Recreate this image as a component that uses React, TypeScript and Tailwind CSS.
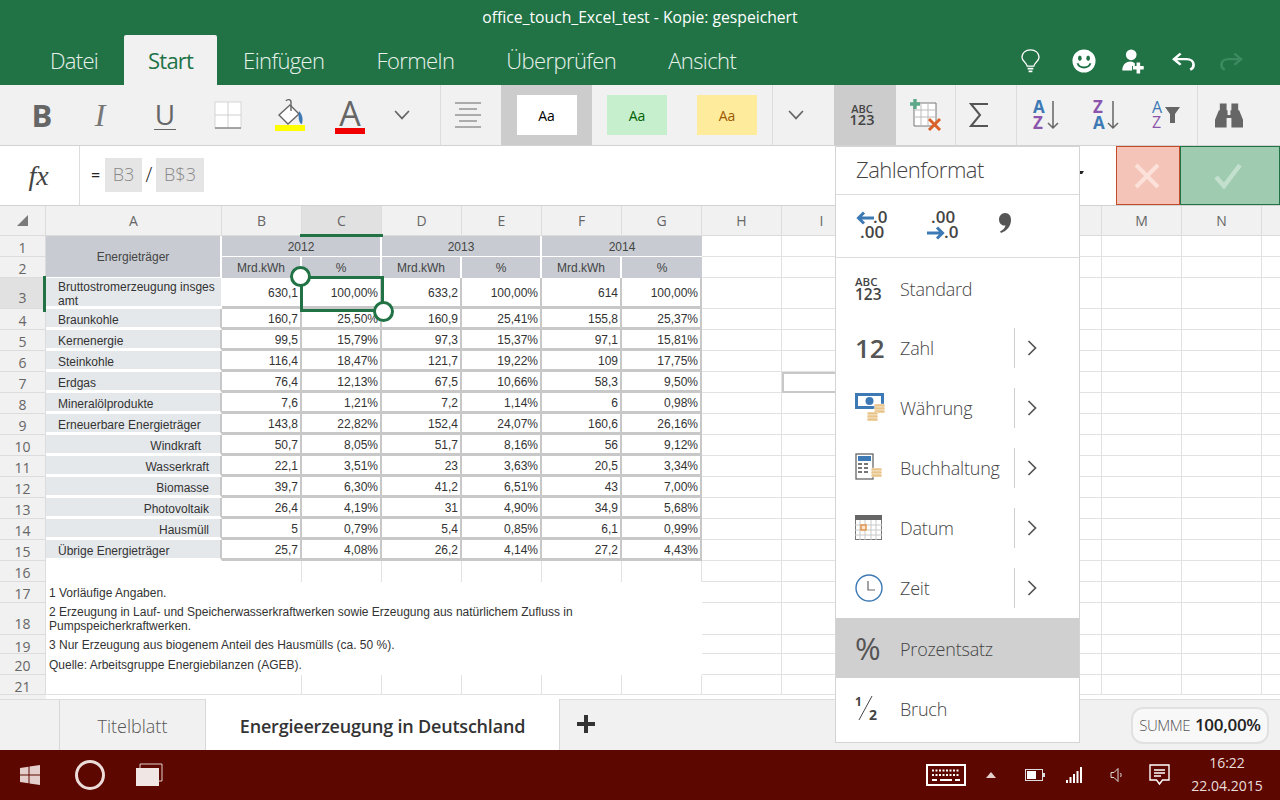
import React from "react";

const tabs = ["Datei", "Start", "Einfügen", "Formeln", "Überprüfen", "Ansicht"];

const Btn = ({ w, children, className = "" }: { w: string; children: React.ReactNode; className?: string }) => (
  <div className={`${w} h-full flex items-center justify-center shrink-0 ${className}`}>{children}</div>
);

const Bold = () => <span className="font-['Open_Sans',sans-serif] text-[31px] font-bold text-[#666] leading-none">B</span>;

function Borders() {
  return (
    <svg width="28" height="28" viewBox="0 0 28 28" fill="none">
      <rect x="1" y="1" width="26" height="26" fill="#fff" stroke="#d6d6d6" strokeWidth="1" />
      <path d="M14 1V27M1 14H27" stroke="#cfcfcf" strokeWidth="1" />
      <path d="M1 27H27" stroke="#777" strokeWidth="1.2" />
    </svg>
  );
}
function Fill() {
  return (
    <svg width="32" height="34" viewBox="0 0 32 34" fill="none">
      <path d="M16 7L5 17L14 26L25 16Z" fill="#fff" stroke="#666" strokeWidth="1.4" />
      <path d="M12 3C13 1 17 1 17 4V13" stroke="#666" strokeWidth="1.4" />
      <path d="M25 13C29 17 29 22 28 26C25 26 24 20 25 13Z" fill="#3d7ab5" />
      <rect x="1" y="27" width="30" height="6" fill="#ffff00" />
    </svg>
  );
}
function SortIcon({ first, second, c1, c2 }: { first: string; second: string; c1: string; c2: string }) {
  return (
    <svg width="28" height="32" viewBox="0 0 28 32" fill="none" className="overflow-visible">
      <text x="0" y="14" fontFamily="Open Sans" fontWeight="700" fontSize="17" fill={c1}>{first}</text>
      <text x="0" y="30" fontFamily="Open Sans" fontWeight="700" fontSize="17" fill={c2}>{second}</text>
      <path d="M20 2V29M15 24L20 29L25 24" stroke="#666" strokeWidth="1.5" />
    </svg>
  );
}
function InsertTable() {
  return (
    <svg width="32" height="32" viewBox="0 0 32 32" fill="none">
      <path d="M4 4H26V27H4Z" fill="#fff" stroke="#777" />
      <path d="M4 11H26M4 18H26M11 4V27M18 4V27" stroke="#bbb" />
      <path d="M5 0V10M0 5H10" stroke="#5fa88a" strokeWidth="3.4" />
      <path d="M19 20L30 31M30 20L19 31" stroke="#d8622a" strokeWidth="3" />
    </svg>
  );
}
function Binoculars() {
  return (
    <svg width="28" height="26" viewBox="0 0 29 26" fill="#666">
      <path d="M5 1H12V9H5ZM17 1H24V9H17Z" />
      <path d="M4 8H13V13H16V8H25L29 18V26H17V16H12V26H0V18Z" />
    </svg>
  );
}
function Funnel() {
  return (
    <svg width="30" height="32" viewBox="0 0 30 32" fill="none" className="overflow-visible">
      <text x="0" y="14" fontFamily="Open Sans" fontWeight="400" fontSize="16" fill="#3d7ab5">A</text>
      <text x="0" y="29" fontFamily="Open Sans" fontWeight="400" fontSize="16" fill="#8b55ad">Z</text>
      <path d="M13 8H28L23 15V24H18V15Z" fill="#666" />
    </svg>
  );
}
const Chevron = ({ size = 16 }: { size?: number }) => (
  <svg width={size} height={size * 0.62} viewBox="0 0 16 10" fill="none">
    <path d="M1 1L8 8.5L15 1" stroke="#666" strokeWidth="1.7" />
  </svg>
);

function Ribbon() {
  return (
    <div className="h-[61px] shrink-0 flex bg-[#f1f1f1] border-b border-[#d2d2d2] pl-[12px]">
      <Btn w="w-[60px]"><Bold /></Btn>
      <Btn w="w-[56px]"><span className="font-['Liberation_Serif',serif] italic text-[32px] text-[#777] leading-none">I</span></Btn>
      <Btn w="w-[74px]">
        <span className="flex flex-col items-center">
          <span className="font-['Open_Sans',sans-serif] text-[28px] text-[#666] leading-[28px]">U</span>
          <span className="w-[22px] h-[1px] bg-[#666] mt-[1px]" />
        </span>
      </Btn>
      <Btn w="w-[52px]"><Borders /></Btn>
      <Btn w="w-[72px]"><Fill /></Btn>
      <Btn w="w-[48px]">
        <span className="flex flex-col items-center mt-[2px]">
          <span className="font-['Open_Sans',sans-serif] text-[34px] text-[#666] leading-[30px]">A</span>
          <span className="w-[30px] h-[6px] bg-[#f00000]" />
        </span>
      </Btn>
      <Btn w="w-[56px]"><Chevron /></Btn>
      <div className="w-[11px] h-full border-r border-[#dcdcdc]" />
      <Btn w="w-[60px]" className="pr-[6px]">
        <svg width="28" height="28" viewBox="0 0 28 28" stroke="#666"><path d="M1 2H27M5 8H23M1 14H27M5 20H23M1 26H27" /></svg>
      </Btn>
      <Btn w="w-[91px]" className="bg-[#cccccc]">
        <div className="w-[60px] h-[40px] bg-white flex items-center justify-center text-[14px] text-black">Aa</div>
      </Btn>
      <Btn w="w-[90px]"><div className="w-[60px] h-[40px] bg-[#c6efce] flex items-center justify-center text-[14px] text-[#006100]">Aa</div></Btn>
      <Btn w="w-[91px]" className="border-r border-[#dcdcdc]"><div className="w-[60px] h-[40px] bg-[#ffeb9c] flex items-center justify-center text-[14px] text-[#9c5700]">Aa</div></Btn>
      <Btn w="w-[61px]" className="pr-[15px]"><Chevron /></Btn>
      <Btn w="w-[62px]" className="bg-[#cccccc] pr-[6px]">
        <div className="flex flex-col items-center text-[#444] leading-none">
          <span className="text-[11px] font-semibold">ABC</span>
          <span className="text-[14.5px] font-semibold -mt-[1px]">123</span>
        </div>
      </Btn>
      <Btn w="w-[60px]" className="border-r border-[#dcdcdc]"><InsertTable /></Btn>
      <Btn w="w-[61px]" className="border-r border-[#dcdcdc] pr-[14px]">
        <svg width="20" height="26" viewBox="0 0 20 26" fill="none" stroke="#555" strokeWidth="2"><path d="M19 2H2L11 13L2 24H19" /></svg>
      </Btn>
      <Btn w="w-[60px]"><SortIcon first="A" second="Z" c1="#3d7ab5" c2="#8b55ad" /></Btn>
      <Btn w="w-[60px]"><SortIcon first="Z" second="A" c1="#8b55ad" c2="#3d7ab5" /></Btn>
      <Btn w="w-[61px]" className="border-r border-[#dcdcdc]"><Funnel /></Btn>
      <Btn w="w-[61px]"><Binoculars /></Btn>
    </div>
  );
}

function TitleIcons() {
  return (
    <div className="flex items-center ml-auto mr-[37px] pt-[2px]">
      <svg width="19" height="24" viewBox="0 0 20 28" fill="none" stroke="#fff" strokeWidth="1.4" preserveAspectRatio="none"><path d="M6.5 20C6 16 1 14 1 9.5C1 4.5 5 1 10 1C15 1 19 4.5 19 9.5C19 14 14 16 13.5 20Z" /><path d="M7 23H13M8 26H12" strokeWidth="2" /></svg>
      <svg width="24" height="24" viewBox="0 0 26 26" className="ml-[32px]"><circle cx="13" cy="13" r="12.5" fill="#fff" /><ellipse cx="8.5" cy="10" rx="2" ry="3" fill="#217346" /><ellipse cx="17.5" cy="10" rx="2" ry="3" fill="#217346" /><path d="M6 15.5C8 21.5 18 21.5 20 15.5" stroke="#217346" strokeWidth="2" fill="none" /></svg>
      <svg width="24" height="25" viewBox="0 0 26 28" fill="#fff" className="ml-[25px]"><circle cx="11" cy="6.5" r="6" /><path d="M1 24C1 17 6 14 10 14C12 14 14 15 15 16V19H12V24Z" /><path d="M17 15H21V19H25V23H21V27.5H17V23H13V19H17Z" /></svg>
      <svg width="23" height="19" viewBox="0 0 24 24" fill="none" stroke="#fff" strokeWidth="2.8" className="ml-[27px]" preserveAspectRatio="none"><path d="M9 2L2 9L9 16" /><path d="M2 9H15C20 9 22.5 12 22.5 16C22.5 19 21 21.5 19 22.5" /></svg>
      <svg width="23" height="19" viewBox="0 0 24 24" fill="none" stroke="#3c8a60" strokeWidth="2.8" className="ml-[25px]" preserveAspectRatio="none"><path d="M15 2L22 9L15 16" /><path d="M22 9H9C4 9 1.5 12 1.5 16C1.5 19 3 21.5 5 22.5" /></svg>
    </div>
  );
}

function Header() {
  return (
    <div className="h-[85px] shrink-0 bg-[#217346] flex flex-col">
      <div className="h-[35px] flex items-center justify-center text-white text-[15.7px] pt-[1px]">office_touch_Excel_test - Kopie: gespeichert</div>
      <div className="h-[50px] flex items-stretch pl-[24px]">
        <div className="px-[26px] text-[#e8f2ec] text-[22px] font-light flex items-center tracking-[-0.7px]">Datei</div>
        <div className="px-[24px] bg-[#f1f1f1] text-[#217346] text-[22px] flex items-center rounded-t-[2px] tracking-[-0.8px] font-normal">Start</div>
        {tabs.slice(2).map((t) => (
          <div key={t} className="px-[26px] text-[#e8f2ec] text-[22px] font-light flex items-center tracking-[-0.6px]">{t}</div>
        ))}
        <TitleIcons />
      </div>
    </div>
  );
}

function FormulaBar() {
  return (
    <div className="h-[60px] shrink-0 bg-white border-b border-[#d2d2d2] flex items-stretch relative">
      <div className="w-[80px] border-r border-[#dcdcdc] flex items-center justify-center pr-[2px] font-['Liberation_Serif',serif] italic text-[28px] text-[#444]">fx</div>
      <div className="flex items-center pl-[11px] pb-[2px] text-[18px] font-light text-[#888]">
        <span className="text-[#222] font-normal text-[16px] mr-[3px] w-[11px]">=</span>
        <span className="h-[34px] w-[37px] bg-[#e5e5e5] flex items-center justify-center">B3</span>
        <span className="w-[14px] text-center text-[#222] text-[20px]">/</span>
        <span className="h-[34px] w-[48px] bg-[#e5e5e5] flex items-center justify-center">B$3</span>
      </div>
      <div className="ml-auto flex items-stretch">
        <div className="w-[64px] bg-[#f5c4b8] border border-[#c44a28] flex items-center justify-center pr-[3px]">
          <svg width="26" height="26" viewBox="0 0 26 26" stroke="#fbe1da" strokeWidth="4"><path d="M2 2L24 24M24 2L2 24" /></svg>
        </div>
        <div className="w-[100px] bg-[#9fcbb0] border border-[#217346] flex items-center justify-center pr-[4px]">
          <svg width="28" height="26" viewBox="0 0 28 26" fill="none" stroke="#c3e0cf" strokeWidth="4.5"><path d="M2 14L10 23L26 2" /></svg>
        </div>
      </div>
    </div>
  );
}

const cols = ["B", "C", "D", "E", "F", "G", "H", "I", "J", "K", "L", "M", "N", "O"];
const rowHeadCls = "bg-[#f1f1f1] border-b border-r border-[#dcdcdc] text-[14px] text-[#666] flex justify-center pt-[1px]";
const colHeadCls = "bg-[#f1f1f1] border-r border-b border-[#dcdcdc] text-[14px] text-[#666] flex items-center justify-center pb-[1px]";
const blank = "border-r border-b border-[#e2e2e2]";
const headCell = "bg-[#c8ccd2] border-r-2 border-b border-white flex items-center justify-center text-[12px] text-[#444] font-['Liberation_Sans',sans-serif] pt-[1px]";
const labelBase = "bg-[#e5e8eb] border-b-[3px] border-r border-white text-[12px] text-[#333] font-['Liberation_Sans',sans-serif] flex items-center leading-[14px] pt-[3px]";
const num = "border-r-2 border-b-[3px] border-[#c8c8c8] text-[12px] text-[#333] font-['Liberation_Sans',sans-serif] flex items-center justify-end pt-[2px]";

const data: [string, string, string[]][] = [
  ["Braunkohle", "l", ["160,7", "25,50%", "160,9", "25,41%", "155,8", "25,37%"]],
  ["Kernenergie", "l", ["99,5", "15,79%", "97,3", "15,37%", "97,1", "15,81%"]],
  ["Steinkohle", "l", ["116,4", "18,47%", "121,7", "19,22%", "109", "17,75%"]],
  ["Erdgas", "l", ["76,4", "12,13%", "67,5", "10,66%", "58,3", "9,50%"]],
  ["Mineralölprodukte", "l", ["7,6", "1,21%", "7,2", "1,14%", "6", "0,98%"]],
  ["Erneuerbare Energieträger", "l", ["143,8", "22,82%", "152,4", "24,07%", "160,6", "26,16%"]],
  ["Windkraft", "w", ["50,7", "8,05%", "51,7", "8,16%", "56", "9,12%"]],
  ["Wasserkraft", "r", ["22,1", "3,51%", "23", "3,63%", "20,5", "3,34%"]],
  ["Biomasse", "r", ["39,7", "6,30%", "41,2", "6,51%", "43", "7,00%"]],
  ["Photovoltaik", "r", ["26,4", "4,19%", "31", "4,90%", "34,9", "5,68%"]],
  ["Hausmüll", "r", ["5", "0,79%", "5,4", "0,85%", "6,1", "0,99%"]],
  ["Übrige Energieträger", "l", ["25,7", "4,08%", "26,2", "4,14%", "27,2", "4,43%"]],
];

const Blanks = ({ n, row }: { n: number; row: number }) => (
  <>
    {Array.from({ length: n }).map((_, i) => (
      <div key={`${row}-${i}`} className={row === 7 && i === 1 ? "border-2 border-[#c8c8c8]" : blank} />
    ))}
  </>
);

function Note({ text }: { text: React.ReactNode }) {
  return <div className="col-span-7 pl-[3px] text-[12px] leading-[14px] text-[#333] font-['Liberation_Sans',sans-serif] flex items-center">{text}</div>;
}

function Sheet() {
  return (
    <div className="relative flex-1 overflow-hidden bg-white">
      <div className="grid grid-cols-[46px_176px_repeat(14,80px)] grid-rows-[30px_21px_21px_31px_repeat(14,21px)_32px_19px_21px_20px_10px]">
        <div className={colHeadCls}>
          <svg width="11" height="11" viewBox="0 0 11 11" className="mt-[1px]"><path d="M11 0V11H0Z" fill="#7a7a7a" /></svg>
        </div>
        <div className={colHeadCls}>A</div>
        {cols.map((c) => (
          <div key={c} className={c === "C" ? `${colHeadCls} !bg-[#e1e1e1]` : colHeadCls}>{c}</div>
        ))}

        <div className={rowHeadCls}>1</div>
        <div className={`${headCell} row-span-2`}>Energieträger</div>
        <div className={`${headCell} col-span-2`}>2012</div>
        <div className={`${headCell} col-span-2`}>2013</div>
        <div className={`${headCell} col-span-2 !border-r-0`}>2014</div>
        <Blanks n={8} row={1} />

        <div className={rowHeadCls}>2</div>
        {["Mrd.kWh", "%", "Mrd.kWh", "%", "Mrd.kWh", "%"].map((t, i) => (
          <div key={i} className={`${headCell} !border-b-0 ${i === 5 ? "!border-r-0" : ""}`}>{t}</div>
        ))}
        <Blanks n={8} row={2} />

        <div className={`${rowHeadCls} !bg-[#e1e1e1] items-end`}>3</div>
        <div className={`${labelBase} pl-[12px]`}>Bruttostromerzeugung insges<br />amt</div>
        {["630,1", "100,00%", "633,2", "100,00%", "614", "100,00%"].map((t, i) => (
          <div key={i} className={`${num} pr-[2px]`}>{t}</div>
        ))}
        <Blanks n={8} row={3} />

        {data.map(([label, side, vals], r) => (
          <React.Fragment key={label}>
            <div className={rowHeadCls}>{r + 4}</div>
            <div className={side === "w" ? `${labelBase} justify-end pr-[19px] border-r-2 !border-r-[#c8c8c8]` : side === "r" ? `${labelBase} justify-end pr-[11px] border-r-2 !border-r-[#c8c8c8]` : `${labelBase} pl-[12px] border-r-2 !border-r-[#c8c8c8]`}>{label}</div>
            {vals.map((t, i) => (
              <div key={i} className={`${num} pr-[2px]`}>{t}</div>
            ))}
            <Blanks n={8} row={r + 4} />
          </React.Fragment>
        ))}

        <div className={rowHeadCls}>16</div>
        <div />
        {[0, 1, 2, 3, 4, 5].map((i) => <div key={i} className="border-r border-[#e2e2e2]" />)}
        <Blanks n={8} row={16} />

        <div className={rowHeadCls}>17</div>
        <Note text="1 Vorläufige Angaben." />
        <Blanks n={8} row={17} />

        <div className={`${rowHeadCls} items-end`}>18</div>
        <Note text={<span>2 Erzeugung in Lauf- und Speicherwasserkraftwerken sowie Erzeugung aus natürlichem Zufluss in<br />Pumpspeicherkraftwerken.</span>} />
        <Blanks n={8} row={18} />

        <div className={rowHeadCls}>19</div>
        <Note text="3 Nur Erzeugung aus biogenem Anteil des Hausmülls (ca. 50 %)." />
        <Blanks n={8} row={19} />

        <div className={rowHeadCls}>20</div>
        <Note text="Quelle: Arbeitsgruppe Energiebilanzen (AGEB)." />
        <Blanks n={8} row={20} />

        <div className={rowHeadCls}>21</div>
        <div className="border-b border-[#e2e2e2]" />
        {[0, 1, 2, 3, 4, 5].map((i) => <div key={i} className={blank} />)}
        <Blanks n={8} row={21} />

        <div className="bg-[#f1f1f1]" />
      </div>

      {/* selection overlays */}
      <div className="absolute left-[300px] top-[28px] w-[83px] h-[3px] bg-[#217346]" />
      <div className="absolute left-[43px] top-[70px] w-[3px] h-[36px] bg-[#217346]" />
      <div className="absolute left-[300px] top-[70px] w-[84px] h-[36px] border-[3px] border-[#217346]" />
      <div className="absolute left-[290px] top-[60px] w-[21px] h-[21px] rounded-full bg-white border-[3px] border-[#217346]" />
      <div className="absolute left-[373px] top-[95px] w-[21px] h-[21px] rounded-full bg-white border-[3px] border-[#217346]" />
    </div>
  );
}

function SheetTabs() {
  return (
    <div className="h-[51px] shrink-0 bg-[#f1f1f1] border-t border-[#dcdcdc] flex items-stretch">
      <div className="w-[59px]" />
      <div className="w-[147px] border-l border-r border-[#d8d8d8] flex items-center justify-center text-[18px] font-light text-[#555] pt-[3px]">Titelblatt</div>
      <div className="w-[354px] bg-white -mt-px border-r border-[#d8d8d8] flex items-center justify-center text-[18px] font-semibold text-[#333] tracking-[-0.2px] pt-[4px]">Energieerzeugung in Deutschland</div>
      <div className="w-[52px] flex items-center justify-center pb-[3px]">
        <svg width="18" height="18" viewBox="0 0 18 18" fill="#333"><path d="M7 0H11V7H18V11H11V18H7V11H0V7H7Z" /></svg>
      </div>
      <div className="ml-auto mr-[11px] my-[7px] h-[37px] w-[138px] rounded-[12px] border-2 border-[#e1e1e1] bg-[#f8f8f8] flex items-center justify-center gap-[5px] pb-[1px]">
        <span className="text-[15px] font-light text-[#555] tracking-[-0.5px]">SUMME</span>
        <span className="text-[17px] font-semibold text-[#222] tracking-[-0.3px]">100,00%</span>
      </div>
    </div>
  );
}

function Taskbar() {
  return (
    <div className="h-[50px] shrink-0 bg-[#5c0800] flex items-center text-white">
      <svg width="20" height="20" viewBox="0 0 20 20" fill="#e4cfcc" className="ml-[20px]"><path d="M0 3L8.5 1.7V9.5H0ZM9.5 1.5L20 0V9.5H9.5ZM0 10.5H8.5V18.3L0 17ZM9.5 10.5H20V20L9.5 18.5Z" /></svg>
      <div className="ml-[35px] w-[30px] h-[30px] rounded-full border-[3.5px] border-[#ecdcda]" />
      <svg width="28" height="24" viewBox="0 0 28 24" className="ml-[30px]" fill="none"><path d="M5 5V1H27V18H24" stroke="#e4cfcc" /><rect x="1" y="5" width="23" height="18" fill="#f0e6e4" /></svg>
      <div className="ml-auto flex items-center">
        <svg width="40" height="22" viewBox="0 0 40 22" fill="none" stroke="#fff">
          <rect x="1" y="1" width="38" height="20" strokeWidth="2" />
          <path d="M6 6.5H34M6 11H34" strokeWidth="2" strokeDasharray="2 1.5" />
          <path d="M6 16H11M14 16H26M29 16H34" strokeWidth="2" />
        </svg>
        <svg width="10" height="6" viewBox="0 0 10 6" className="ml-[20px]"><path d="M5 0L10 6H0Z" fill="#e4cfcc" /></svg>
        <svg width="20" height="12" viewBox="0 0 20 12" className="ml-[29px]" fill="none"><rect x="0.5" y="0.5" width="17" height="11" stroke="#ddd" /><rect x="2" y="2" width="9" height="8" fill="#fff" /><rect x="18" y="4" width="2" height="4" fill="#ddd" /></svg>
        <svg width="16" height="16" viewBox="0 0 16 16" className="ml-[21px]" fill="#fff"><path d="M0 13H2V16H0ZM3.5 10H5.5V16H3.5ZM7 7H9V16H7ZM10.5 4H12.5V16H10.5ZM14 0H16V16H14Z" /></svg>
        <svg width="13" height="16" viewBox="0 0 13 16" className="ml-[28px]" fill="none" stroke="#ddd"><path d="M1 5.5H4L8 1.5V14.5L4 10.5H1Z" /><path d="M10.5 6C11.3 7 11.3 9 10.5 10" /></svg>
        <svg width="21" height="22" viewBox="0 0 21 22" className="ml-[26px]" fill="none" stroke="#fff" strokeWidth="1.4"><path d="M1 1H20V16H13.5L10.5 20L7.5 16H1Z" /><path d="M5 6H16M5 9H16M5 12H12" /></svg>
        <div className="w-[100px] ml-[7px] mr-[3px] mb-[2px] flex flex-col items-center text-[14px] leading-[23px] text-[#eadedc]">
          <span>16:22</span>
          <span>22.04.2015</span>
        </div>
      </div>
    </div>
  );
}

const Decrease = ({ top, bottom, dir }: { top: string; bottom: string; dir: "l" | "r" }) => (
  <svg width="32" height="32" viewBox="0 0 32 32" fill="none" className="overflow-visible">
    <text x={dir === "l" ? 17 : 4} y="13" fontFamily="Open Sans" fontWeight="600" fontSize="17" fill="#444">{top}</text>
    <text x={dir === "l" ? 4 : 17} y="28" fontFamily="Open Sans" fontWeight="600" fontSize="17" fill="#444">{bottom}</text>
    {dir === "l" ? (
      <path d="M18 8H3M8 2.5L2.5 8L8 13.5" stroke="#3d7ab5" strokeWidth="3" />
    ) : (
      <path d="M0 23H15M10 17.5L15.5 23L10 28.5" stroke="#3d7ab5" strokeWidth="3" />
    )}
  </svg>
);

const Coins = ({ x, y }: { x: number; y: number }) => (
  <g fill="#e9c58a" stroke="#fff" strokeWidth="0.4">
    <rect x={x} y={y} width="11" height="3" rx="1.5" />
    <rect x={x} y={y + 3} width="11" height="3" rx="1.5" />
    <rect x={x} y={y + 6} width="11" height="3" rx="1.5" />
  </g>
);

const Cash = () => (
  <svg width="32" height="30" viewBox="0 0 32 30">
    <rect x="0" y="0" width="29" height="16" fill="#3d7ab5" />
    <rect x="3" y="3" width="23" height="10" fill="#fff" />
    <circle cx="14.5" cy="8" r="4" fill="#3d7ab5" />
    <path d="M0 0H4L0 4ZM29 0H25L29 4Z" fill="#3d7ab5" />
    <Coins x={19} y={11} />
    <Coins x={12} y={19} />
  </svg>
);
const Calc = () => (
  <svg width="32" height="30" viewBox="0 0 32 30">
    <rect x="1" y="1" width="17" height="25" fill="#fff" stroke="#666" strokeWidth="1.3" />
    <rect x="3" y="3" width="13" height="5" fill="#3d7ab5" />
    <path d="M3 11H7M9 11H13M3 15H7M9 15H13M3 19H7M9 19H13" stroke="#777" strokeWidth="2" />
    <Coins x={16} y={15} />
  </svg>
);
const Cal = () => (
  <svg width="28" height="26" viewBox="0 0 28 26" fill="none">
    <rect x="0.5" y="0.5" width="26" height="24" fill="#fff" stroke="#777" />
    <rect x="0" y="0" width="27" height="5" fill="#666" />
    <path d="M0 10H27M0 15H27M0 20H27M5 5V25M10 5V25M16 5V25M21 5V25" stroke="#c9c9c9" />
    <rect x="6" y="10" width="5" height="5" stroke="#e08a3c" strokeWidth="1.3" fill="#fbe5cf" />
  </svg>
);
const Clock = () => (
  <svg width="28" height="28" viewBox="0 0 28 28" fill="none">
    <circle cx="14" cy="14" r="13" stroke="#3d7ab5" strokeWidth="1.4" />
    <path d="M13 7V16H20" stroke="#666" strokeWidth="1.2" />
  </svg>
);

function MenuItem({ icon, label, sub, active, low }: { icon: React.ReactNode; label: string; sub?: boolean; active?: boolean; low?: boolean }) {
  return (
    <div className={active ? "h-[60px] flex items-center bg-[#d0d0d0]" : "h-[60px] flex items-center"}>
      <div className="w-[64px] pl-[19px] flex items-center shrink-0">{icon}</div>
      <div className={low ? "flex-1 text-[18px] font-light text-[#444] tracking-[-0.2px] pt-[3px]" : "flex-1 text-[18px] font-light text-[#444] tracking-[-0.2px]"}>{label}</div>
      {sub && (
        <div className="w-[65px] h-[40px] border-l border-[#cfcfcf] flex items-center pl-[12px]">
          <svg width="10" height="16" viewBox="0 0 10 16" fill="none" stroke="#555" strokeWidth="1.7"><path d="M1.5 1L8.5 8L1.5 15" /></svg>
        </div>
      )}
    </div>
  );
}

function NumberPanel() {
  return (
    <div className="absolute left-[835px] top-[146px] w-[245px] h-[597px] bg-white border border-[#d4d4d4] flex flex-col z-10">
      <div className="h-[48px] border-b border-[#dcdcdc] flex items-center pl-[20px] pb-[2px] text-[22px] font-light text-[#444] tracking-[-0.5px] shrink-0">Zahlenformat</div>
      <div className="h-[63px] border-b border-[#dcdcdc] flex items-center pl-[20px] shrink-0">
        <Decrease top=".0" bottom=".00" dir="l" />
        <div className="ml-[39px]"><Decrease top=".00" bottom=".0" dir="r" /></div>
        <svg width="12" height="20" viewBox="0 0 12 20" fill="#555" className="ml-[40px] mb-[6px]"><path d="M6 0C10 0 12 3 12 7C12 13 8 18 2 20L1 18.5C4 17 6 15 6.5 12.5C3 13 0 10.5 0 6.5C0 3 2.5 0 6 0Z" /></svg>
      </div>
      <MenuItem label="Standard" low icon={<div className="flex flex-col items-start text-[#444] leading-none pt-[2px]"><span className="text-[11.5px] font-semibold">ABC</span><span className="text-[15.5px] font-semibold -mt-[1px]">123</span></div>} />
      <MenuItem label="Zahl" sub icon={<span className="text-[26px] font-semibold text-[#555] leading-none">12</span>} />
      <MenuItem label="Währung" sub icon={<Cash />} />
      <MenuItem label="Buchhaltung" sub icon={<Calc />} />
      <MenuItem label="Datum" sub icon={<Cal />} />
      <MenuItem label="Zeit" sub icon={<Clock />} />
      <MenuItem label="Prozentsatz" low active icon={<span className="text-[31px] text-[#555] leading-none">%</span>} />
      <MenuItem label="Bruch" low icon={
        <svg width="24" height="26" viewBox="0 0 24 26" fill="#444" className="overflow-visible">
          <text x="0" y="11" fontFamily="Open Sans" fontWeight="700" fontSize="12">1</text>
          <text x="14" y="25" fontFamily="Open Sans" fontWeight="700" fontSize="14">2</text>
          <path d="M4 25L17 1" stroke="#444" strokeWidth="1" />
        </svg>
      } />
    </div>
  );
}

export default function App() {
  return (
    <div className="relative w-[1280px] h-[800px] overflow-hidden flex flex-col font-['Open_Sans',sans-serif] bg-white">
      <Header />
      <Ribbon />
      <FormulaBar />
      <Sheet />
      <SheetTabs />
      <Taskbar />
      <NumberPanel />
      <div className="absolute left-[1079px] top-[171px] w-[4px] h-[3px] bg-[#222] -skew-x-[30deg]" />
    </div>
  );
}
